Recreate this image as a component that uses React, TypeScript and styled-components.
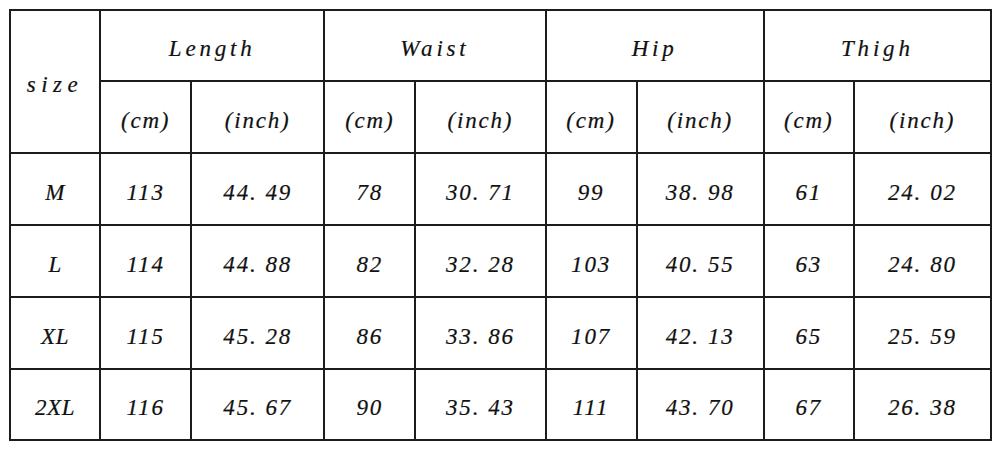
import React from "react";
import styled, { createGlobalStyle } from "styled-components";

const GlobalStyle = createGlobalStyle`
  html, body {
    margin: 0;
    padding: 0;
    background: #ffffff;
  }
`;

const Page = styled.div`
  width: 1000px;
  height: 451px;
  padding: 9px 0 0 9px;
  box-sizing: border-box;
  background: #fff;
`;

const Table = styled.table`
  border-collapse: collapse;
  table-layout: fixed;
  width: 983px;
  font-family: "Liberation Serif", "Times New Roman", serif;
  font-style: italic;
  color: #111;
`;

const Cell = styled.td<{ $h: number; $spacing?: number }>`
  border: 2px solid #1c1c1c;
  height: ${(p) => p.$h}px;
  padding: 6px 0 0 0;
  text-align: center;
  vertical-align: middle;
  font-size: 23px;
  letter-spacing: ${(p) => p.$spacing ?? 1.8}px;
  line-height: 1;
  -webkit-text-stroke: 0.2px #111;
  box-sizing: border-box;
`;

const Dot = styled.span`
  margin-right: 8px;
`;

const columns = [90, 91, 133, 91, 130, 91, 127, 90, 137];
const groups = ["Length", "Waist", "Hip", "Thigh"];

const rows = [
  { size: "M", values: ["113", "44.49", "78", "30.71", "99", "38.98", "61", "24.02"] },
  { size: "L", values: ["114", "44.88", "82", "32.28", "103", "40.55", "63", "24.80"] },
  { size: "XL", values: ["115", "45.28", "86", "33.86", "107", "42.13", "65", "25.59"] },
  { size: "2XL", values: ["116", "45.67", "90", "35.43", "111", "43.70", "67", "26.38"] },
];

const Num = ({ value }: { value: string }) => {
  const [whole, frac] = value.split(".");
  if (frac === undefined) return <>{value}</>;
  return (
    <>
      {whole}
      <Dot>.</Dot>
      {frac}
    </>
  );
};

const App = () => (
  <>
    <GlobalStyle />
    <Page>
      <Table>
        <colgroup>
          {columns.map((w, i) => (
            <col key={i} style={{ width: w }} />
          ))}
        </colgroup>
        <tbody>
          <tr>
            <Cell $h={71} $spacing={5.5} rowSpan={2}>size</Cell>
            {groups.map((g) => (
              <Cell key={g} $h={71} $spacing={3.8} colSpan={2}>
                {g}
              </Cell>
            ))}
          </tr>
          <tr>
            {groups.map((g) => (
              <React.Fragment key={g}>
                <Cell $h={72}>(cm)</Cell>
                <Cell $h={72}>(inch)</Cell>
              </React.Fragment>
            ))}
          </tr>
          {rows.map((r, i) => (
            <tr key={r.size}>
              <Cell $h={i === rows.length - 1 ? 71 : 72} $spacing={0.5}>
                {r.size}
              </Cell>
              {r.values.map((v, j) => (
                <Cell key={j} $h={i === rows.length - 1 ? 71 : 72}>
                  <Num value={v} />
                </Cell>
              ))}
            </tr>
          ))}
        </tbody>
      </Table>
    </Page>
  </>
);

export default App;
